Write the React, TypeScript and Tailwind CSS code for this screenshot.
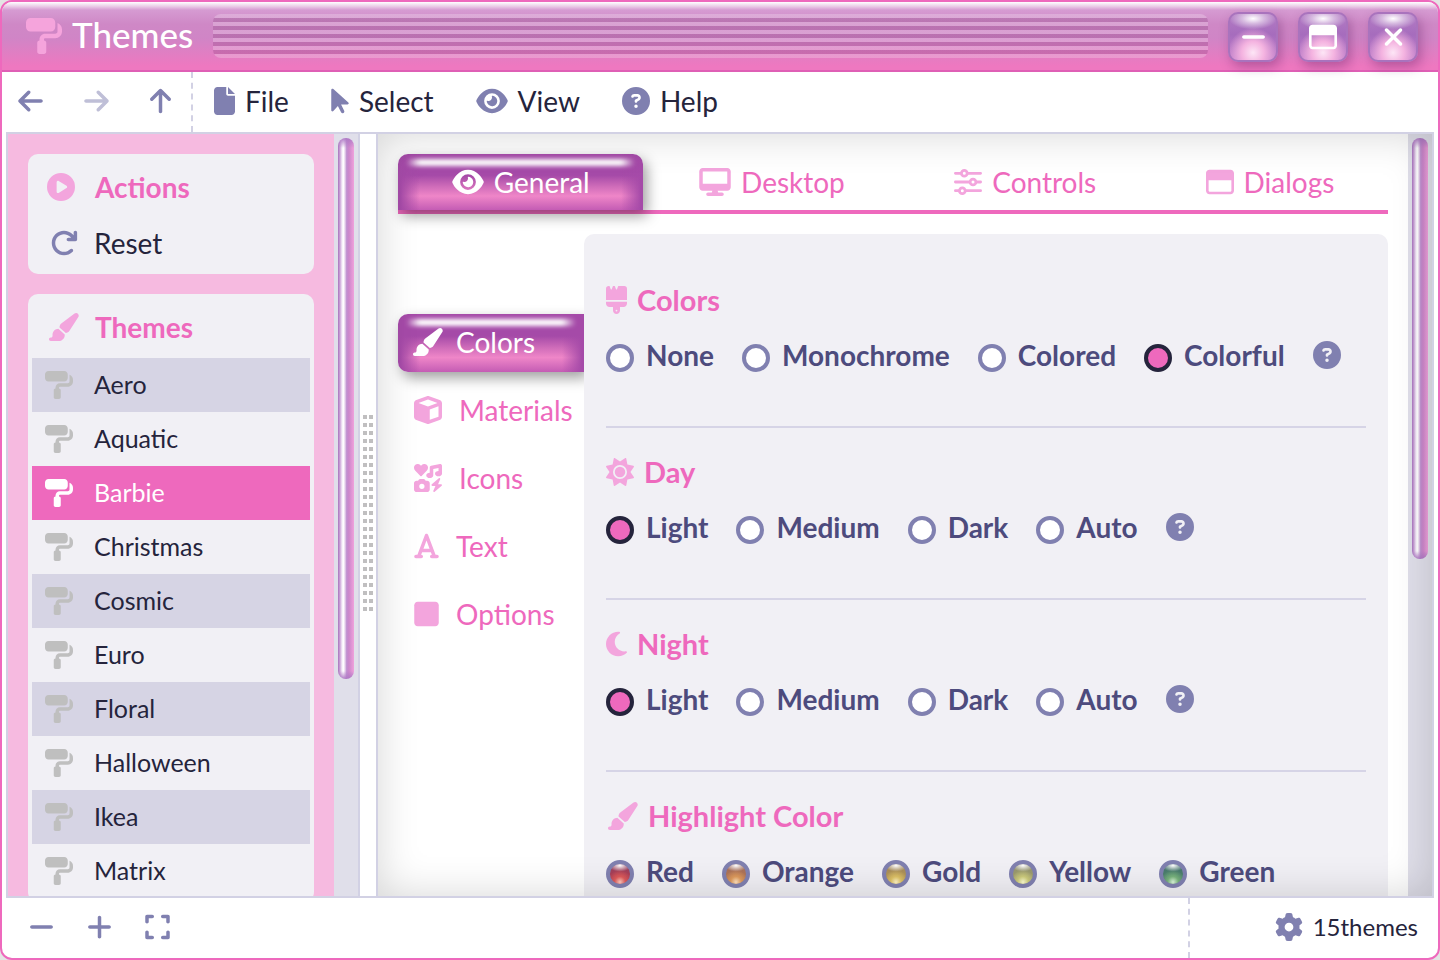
import { useState } from 'react'
import type { ComponentType, ReactNode } from 'react'
import {
  FaArrowLeft,
  FaArrowPointer,
  FaArrowRight,
  FaArrowRotateRight,
  FaArrowUp,
  FaBrush,
  FaCirclePlay,
  FaCircleQuestion,
  FaCube,
  FaDesktop,
  FaExpand,
  FaEye,
  FaFile,
  FaFont,
  FaGear,
  FaIcons,
  FaMinus,
  FaMoon,
  FaPaintRoller,
  FaPaintbrush,
  FaPlus,
  FaRegWindowMaximize,
  FaSquare,
  FaSun,
  FaXmark,
} from 'react-icons/fa6'

type Glyph = ComponentType<{ className?: string }>

const narrow = 'h-7 w-[21px] shrink-0'
const medium = 'h-7 w-[25px] shrink-0'
const square = 'h-7 w-7 shrink-0'
const wide = 'h-7 w-8 shrink-0'

function Sliders({ className }: { className?: string }) {
  return (
    <svg viewBox="0 0 28 28" fill="none" stroke="currentColor" strokeWidth="2.8" strokeLinecap="round" className={className}>
      <path d="M1.4 5.3H7M13.6 5.3h13M1.4 14H15.7M22.3 14h4.3M1.4 22.7H5M11.6 22.7h15" />
      <circle cx="10.3" cy="5.3" r="2.9" />
      <circle cx="19" cy="14" r="2.9" />
      <circle cx="8.3" cy="22.7" r="2.9" />
    </svg>
  )
}

const themes = ['Aero', 'Aquatic', 'Barbie', 'Christmas', 'Cosmic', 'Euro', 'Floral', 'Halloween', 'Ikea', 'Matrix']

const menus: { label: string; Icon: Glyph; size: string }[] = [
  { label: 'File', Icon: FaFile, size: narrow },
  { label: 'Select', Icon: FaArrowPointer, size: 'h-7 w-[18px] shrink-0' },
  { label: 'View', Icon: FaEye, size: wide },
  { label: 'Help', Icon: FaCircleQuestion, size: square },
]

const tabs: { label: string; Icon: Glyph; size: string }[] = [
  { label: 'General', Icon: FaEye, size: wide },
  { label: 'Desktop', Icon: FaDesktop, size: wide },
  { label: 'Controls', Icon: Sliders, size: square },
  { label: 'Dialogs', Icon: FaRegWindowMaximize, size: square },
]

const sideTabs: { label: string; Icon: Glyph; size: string; box: string }[] = [
  { label: 'Colors', Icon: FaPaintbrush, size: wide, box: 'w-[25px]' },
  { label: 'Materials', Icon: FaCube, size: square, box: 'w-7' },
  { label: 'Icons', Icon: FaIcons, size: square, box: 'w-7' },
  { label: 'Text', Icon: FaFont, size: medium, box: 'w-[25px]' },
  { label: 'Options', Icon: FaSquare, size: medium, box: 'w-[25px]' },
]

const glossy =
  'bg-[linear-gradient(to_right,#a54aa8_2px,transparent_22px,transparent_calc(100%-22px),#a54aa8_calc(100%-2px)),linear-gradient(to_bottom,#a54aa8_0%,#a54aa8_38%,#cf6cb9_58%,#ef86c8_75%,#c45cb4_100%)] text-white'

function Gloss() {
  return (
    <span
      aria-hidden="true"
      className="pointer-events-none absolute inset-x-2 top-[5px] h-[7px] rounded-full bg-[linear-gradient(to_right,transparent,white_14px,white_calc(100%-14px),transparent)] blur-[2px]"
    />
  )
}

function TitleButton({ label, children }: { label: string; children: ReactNode }) {
  return (
    <button
      aria-label={label}
      className="flex size-[50px] items-center justify-center rounded-[10px] border-2 border-[#a973bd] bg-[radial-gradient(ellipse_24px_11px_at_50%_10%,white_0%,rgba(255,255,255,0.5)_45%,transparent_100%),radial-gradient(circle_25px_at_50%_84%,#fde6f6_0%,#f4b3e0_45%,transparent_100%),linear-gradient(to_bottom,#b37cc4,#a66cbd_45%,#c583cc_100%)] text-white shadow-[3px_5px_12px_rgba(80,20,90,0.35)]"
    >
      {children}
    </button>
  )
}

function Scrollbar({ thumb }: { thumb: string }) {
  return (
    <div className="w-6 shrink-0 bg-[#e0dfea] p-1">
      <div
        className={
          'rounded-full bg-[linear-gradient(to_bottom,#b07ac6,transparent_10px),linear-gradient(to_top,#b07ac6,transparent_8px),linear-gradient(to_right,#a873be_0%,#c9a3d6_12%,#f6effa_26%,#ffffff_34%,#e6d3ec_44%,#c08fd0_54%,#cc86cb_68%,#f0a2dc_100%)] ' +
          thumb
        }
      />
    </div>
  )
}

const ring: Record<string, string> = {
  Red: 'bg-[radial-gradient(ellipse_11px_6px_at_50%_8%,white,transparent),radial-gradient(circle_12px_at_50%_90%,#ffc9bd,#dc5a5a_45%,transparent),linear-gradient(#93405f,#c04050)]',
  Orange: 'bg-[radial-gradient(ellipse_11px_6px_at_50%_8%,white,transparent),radial-gradient(circle_12px_at_50%_90%,#ffe0bd,#dd9a5c_45%,transparent),linear-gradient(#a06a5a,#c08055)]',
  Gold: 'bg-[radial-gradient(ellipse_11px_6px_at_50%_8%,white,transparent),radial-gradient(circle_12px_at_50%_90%,#fff3c4,#dcc065_45%,transparent),linear-gradient(#a08558,#bda058)]',
  Yellow: 'bg-[radial-gradient(ellipse_11px_6px_at_50%_8%,white,transparent),radial-gradient(circle_12px_at_50%_90%,#fbfbd0,#cccb7c_45%,transparent),linear-gradient(#8f8f6e,#aaa970)]',
  Green: 'bg-[radial-gradient(ellipse_11px_6px_at_50%_8%,white,transparent),radial-gradient(circle_12px_at_50%_90%,#dcf6dc,#78b27c_45%,transparent),linear-gradient(#44706c,#558f70)]',
}

type ChoicesProps = { title: string; Icon: Glyph; size: string; options: string[]; initial?: string; help?: boolean }

function Choices({ title, Icon, size, options, initial, help }: ChoicesProps) {
  const [value, setValue] = useState(initial)
  return (
    <fieldset className="border-b-2 border-[#d6d4e6] pt-[23px] pb-[37px]">
      <legend className="contents">
        <span className="flex h-11 items-center gap-2.5 pb-0.5 text-[29px] font-bold text-[#ee69bd]">
          <Icon className={size + ' text-[#f3a5dd]'} />
          {title}
        </span>
      </legend>
      <div className="flex h-[66px] items-center gap-7 pb-0.5 text-[28px] leading-8 font-bold whitespace-nowrap text-[#4d4b7d]">
        {options.map((option) => (
          <label key={option} className="flex items-center gap-3">
            <input
              type="radio"
              name={title}
              checked={value === option}
              onChange={() => setValue(option)}
              className={
                'mt-1.5 size-7 appearance-none rounded-full border-4 border-[#8080b0] checked:border-[#25243c] checked:bg-[#ee69bd] ' +
                (ring[option] ?? 'bg-white')
              }
            />
            {option}
          </label>
        ))}
        {help && (
          <button type="button" aria-label={'About ' + title}>
            <FaCircleQuestion className={square + ' text-[#8080b0]'} />
          </button>
        )}
      </div>
    </fieldset>
  )
}

export default function App() {
  const [theme, setTheme] = useState('Barbie')
  return (
    <div className="h-screen bg-[#e4e4e4] font-[Lato,'Noto_Sans',sans-serif] text-[#25243c]">
      <div className="flex h-full flex-col overflow-hidden rounded-xl border-2 border-[#ee69bd] bg-white">
        <header className="flex h-[70px] shrink-0 items-center border-b-2 border-[#df5fb5] bg-[linear-gradient(to_bottom,#ffffff_0px,#ecd0e9_4px,#d69bd2_8px,#cf88c6_22px,#d085c6_36px,#ee78c0_64px)] pr-5 pl-6">
          <FaPaintRoller className="h-9 w-9 shrink-0 text-[#f5a4dc]" />
          <h1 className="ml-2.5 pb-1 text-[35px] leading-10 font-medium text-white">Themes</h1>
          <div className="mx-5 h-11 flex-1 rounded-lg bg-[repeating-linear-gradient(to_bottom,rgba(255,255,255,0.22)_0px,rgba(255,255,255,0.22)_4px,rgba(90,20,80,0.18)_4px,rgba(90,20,80,0.18)_8px)]" />
          <div className="flex gap-5 pt-0.5">
            <TitleButton label="Minimize">
              <FaMinus className={medium} />
            </TitleButton>
            <TitleButton label="Maximize">
              <FaRegWindowMaximize className={square} />
            </TitleButton>
            <TitleButton label="Close">
              <FaXmark className={medium} />
            </TitleButton>
          </div>
        </header>

        <nav className="flex h-[60px] shrink-0 items-stretch">
          <div className="flex items-center gap-[41px] border-r-2 border-dashed border-[#d2d1e4] pr-5 pb-0.5 pl-4 text-[#8080b0]">
            <button aria-label="Back">
              <FaArrowLeft className={medium} />
            </button>
            <button aria-label="Forward" disabled className="opacity-50">
              <FaArrowRight className={medium} />
            </button>
            <button aria-label="Up">
              <FaArrowUp className={narrow} />
            </button>
          </div>
          {menus.map(({ label, Icon, size }) => (
            <button key={label} className="flex items-center gap-2.5 px-[21px] pb-0.5 text-[28px]">
              <Icon className={size + ' text-[#8080b0]'} />
              {label}
            </button>
          ))}
        </nav>

        <div className="mx-1 flex min-h-0 flex-1">
          <aside className="flex w-[354px] shrink-0 border-2 border-[#d2d1e4]">
            <div className="flex min-w-0 flex-1 flex-col gap-5 overflow-hidden bg-[#f6bae0] p-5">
              <section className="shrink-0 rounded-[10px] bg-[#f1f0f5] p-1">
                <h2 className="flex h-[60px] items-center gap-5 pb-0.5 pl-[15px] text-[28px] font-bold text-[#ee69bd]">
                  <FaCirclePlay className={square + ' text-[#f3a5dd]'} />
                  Actions
                </h2>
                <button className="flex h-[52px] w-full items-center gap-4 pb-0.5 pl-[18px] text-[28px]">
                  <FaArrowRotateRight className={square + ' text-[#8080b0]'} />
                  Reset
                </button>
              </section>
              <section className="shrink-0 rounded-[10px] bg-[#f1f0f5] p-1">
                <h2 className="flex h-[60px] items-center gap-4 pb-0.5 pl-[15px] text-[28px] font-bold text-[#ee69bd]">
                  <FaPaintbrush className={wide + ' text-[#f3a5dd]'} />
                  Themes
                </h2>
                <ul>
                  {themes.map((name) => (
                    <li key={name} className="odd:bg-[#d6d4e4]">
                      <button
                        onClick={() => setTheme(name)}
                        className={
                          'flex h-[54px] w-full items-center gap-[21px] pl-[13px] text-[25px] ' +
                          (theme === name ? 'bg-[#ee69bd] text-white' : '')
                        }
                      >
                        <FaPaintRoller className={square + (theme === name ? ' text-white' : ' text-[#bfbfbf]')} />
                        {name}
                      </button>
                    </li>
                  ))}
                </ul>
              </section>
            </div>
            <Scrollbar thumb="h-[541px]" />
          </aside>

          <div className="flex w-4 shrink-0 items-center justify-center border-y-2 border-[#d2d1e4] pb-1">
            <div className="h-[196px] w-[10px] bg-[repeating-linear-gradient(to_bottom,transparent_0px,transparent_4px,white_4px,white_8px),repeating-linear-gradient(to_right,#c0bfc0_0px,#c0bfc0_4px,white_4px,white_6px)]" />
          </div>

          <main className="relative flex min-w-0 flex-1 border-2 border-[#d2d1e4]">
            <div className="flex min-w-0 flex-1 flex-col gap-5 overflow-hidden p-5 pb-0">
              <div role="tablist" className="flex shrink-0 gap-0.5 border-b-4 border-[#ee69bd] text-[28px] text-[#ee69bd]">
                {tabs.map(({ label, Icon, size }, i) => (
                  <button
                    key={label}
                    role="tab"
                    aria-selected={i === 0}
                    className={
                      'relative flex h-14 flex-auto items-center justify-center gap-2.5 ' +
                      (i === 0 ? 'rounded-t-[10px] shadow-[4px_6px_14px_rgba(0,0,0,0.38)] ' + glossy : '')
                    }
                  >
                    {i === 0 && <Gloss />}
                    <Icon className={size + (i === 0 ? ' text-white' : ' text-[#f3a5dd]')} />
                    {label}
                  </button>
                ))}
              </div>

              <div className="flex flex-1">
                <div role="tablist" aria-orientation="vertical" className="flex w-[186px] shrink-0 flex-col gap-2.5 pt-20 text-[28px] text-[#ee69bd]">
                  {sideTabs.map(({ label, Icon, size, box }, i) => (
                    <button
                      key={label}
                      role="tab"
                      aria-selected={i === 0}
                      className={
                        'relative flex h-[58px] items-center gap-[17px] pb-0.5 pl-4 ' +
                        (i === 0 ? 'rounded-l-[10px] shadow-[4px_6px_14px_rgba(0,0,0,0.38)] ' + glossy : '')
                      }
                    >
                      {i === 0 && <Gloss />}
                      <span className={'flex shrink-0 justify-center ' + box}>
                        <Icon className={size + (i === 0 ? ' text-white' : ' text-[#f3a5dd]')} />
                      </span>
                      {label}
                    </button>
                  ))}
                </div>

                <div className="relative min-w-0 flex-1 self-start rounded-[10px] bg-[#f1f0f5] px-[22px] pt-[22px]">
                  <Choices title="Colors" Icon={FaBrush} size={narrow} options={['None', 'Monochrome', 'Colored', 'Colorful']} initial="Colorful" help />
                  <Choices title="Day" Icon={FaSun} size={square} options={['Light', 'Medium', 'Dark', 'Auto']} initial="Light" help />
                  <Choices title="Night" Icon={FaMoon} size={narrow} options={['Light', 'Medium', 'Dark', 'Auto']} initial="Light" help />
                  <Choices title="Highlight Color" Icon={FaPaintbrush} size={wide} options={['Red', 'Orange', 'Gold', 'Yellow', 'Green']} />
                </div>
              </div>
            </div>
            <Scrollbar thumb="h-[421px]" />
            <div className="pointer-events-none absolute inset-0 shadow-[inset_0_0_40px_rgba(0,0,0,0.17)]" />
          </main>
        </div>

        <footer className="flex h-[60px] shrink-0 items-stretch pl-2.5 text-[#8080b0]">
          <button aria-label="Zoom out" className="flex w-[58px] items-center justify-center pb-0.5">
            <FaMinus className={medium} />
          </button>
          <button aria-label="Zoom in" className="flex w-[58px] items-center justify-center pb-0.5">
            <FaPlus className={medium} />
          </button>
          <button aria-label="Fit to window" className="flex w-[58px] items-center justify-center pb-0.5">
            <FaExpand className={medium} />
          </button>
          <div className="ml-auto flex w-[250px] items-center justify-end gap-2.5 border-l-2 border-dashed border-[#d2d1e4] pr-5 pb-0.5 text-[24px]">
            <FaGear className={square} />
            <span className="text-[#25243c]">15themes</span>
          </div>
        </footer>
      </div>
    </div>
  )
}
